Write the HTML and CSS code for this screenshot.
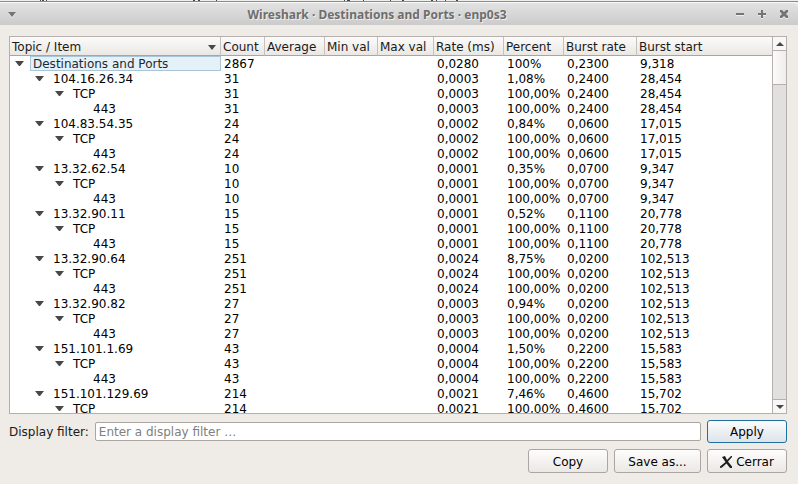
FILE: index.html
```html
<!DOCTYPE html>
<html lang="en">
<head>
<meta charset="utf-8">
<title>Wireshark · Destinations and Ports · enp0s3</title>
<link rel="stylesheet" href="styles.css">
</head>
<body>
<div class="backdrop"><svg width="460" height="1" viewBox="0 0 460 1" aria-hidden="true"><path d="M40 0h1v1h-1zM42 0h2v1h-2zM46 0h1v1h-1zM193 0h2v1h-2zM198 0h2v1h-2zM216 0h1v1h-1zM344 0h1v1h-1zM347 0h3v1h-3zM363 0h1v1h-1zM390 0h1v1h-1zM402 0h2v1h-2zM431 0h2v1h-2zM436 0h1v1h-1zM445 0h1v1h-1zM456 0h2v1h-2z"/></svg></div>
<header class="titlebar">
  <button class="wm" aria-label="Window menu"><svg width="8" height="5" viewBox="0 0 8 5"><path d="M0 0h8L4 5z"/></svg></button>
  <h1>Wireshark · Destinations and Ports · enp0s3</h1>
  <div class="wm-group">
    <button class="wm" aria-label="Minimize"><svg width="8" height="8" viewBox="0 0 8 8"><path d="M0 3h8v2H0z"/></svg></button>
    <button class="wm" aria-label="Maximize"><svg width="8" height="8" viewBox="0 0 8 8"><path d="M3 0h2v3h3v2H5v3H3V5H0V3h3z"/></svg></button>
    <button class="wm" aria-label="Close"><svg width="8" height="8" viewBox="0 0 8 8"><path d="M0 0h2l2 2 2-2h2v2L6 4l2 2v2H6L4 6 2 8H0V6l2-2-2-2z"/></svg></button>
  </div>
</header>
<main class="dialog">
  <div class="panel">
    <div class="view">
      <table>
        <colgroup><col class="c-item"><col class="c-count"><col class="c-avg"><col class="c-min"><col class="c-max"><col class="c-rate"><col class="c-pct"><col class="c-brate"><col></colgroup>
        <thead><tr>
          <th><span class="sorted">Topic / Item<svg width="8" height="5" viewBox="0 0 8 5"><path d="M0 0h8L4 5z"/></svg></span></th>
          <th>Count</th><th>Average</th><th>Min val</th><th>Max val</th><th>Rate (ms)</th><th>Percent</th><th>Burst rate</th><th>Burst start</th>
        </tr></thead>
        <tbody id="rows"></tbody>
      </table>
    </div>
    <div class="scrollbar">
      <button aria-label="Scroll up"><svg width="8" height="4" viewBox="0 0 8 4"><path d="M4 0l4 4H0z"/></svg></button>
      <div class="track"><div class="thumb"></div></div>
      <button aria-label="Scroll down"><svg width="8" height="4" viewBox="0 0 8 4"><path d="M0 0h8L4 4z"/></svg></button>
    </div>
  </div>
  <form class="filter">
    <label for="filter">Display filter:</label>
    <input id="filter" type="text" placeholder="Enter a display filter …">
    <button type="button" class="btn default">Apply</button>
  </form>
  <div class="actions">
    <button class="btn">Copy</button>
    <button class="btn save">Save as...</button>
    <button class="btn"><svg width="13" height="12" viewBox="0 0 13 12"><path d="M2 1L5 0l2 4 4-4h1v1L8 5.500l4 5V12h-2L6.500 7.500 2 11.500 0 12v-1.500L5.500 6z"/></svg>Cerrar</button>
  </div>
</main>
<script src="rows.js"></script>
</body>
</html>
```
FILE: rows.js
```js
const hosts = [
  ["104.16.26.34", "31", "0,0003", "1,08%", "0,2400", "28,454"],
  ["104.83.54.35", "24", "0,0002", "0,84%", "0,0600", "17,015"],
  ["13.32.62.54", "10", "0,0001", "0,35%", "0,0700", "9,347"],
  ["13.32.90.11", "15", "0,0001", "0,52%", "0,1100", "20,778"],
  ["13.32.90.64", "251", "0,0024", "8,75%", "0,0200", "102,513"],
  ["13.32.90.82", "27", "0,0003", "0,94%", "0,0200", "102,513"],
  ["151.101.1.69", "43", "0,0004", "1,50%", "0,2200", "15,583"],
  ["151.101.129.69", "214", "0,0021", "7,46%", "0,4600", "15,702"]
];
const arrow = '<svg width="9" height="5" viewBox="0 0 9 5"><path d="M0 0h9L5 5H4z"/></svg>';
const body = document.getElementById("rows");

function addRow(level, name, count, rate, percent, burst, start) {
  const tr = document.createElement("tr");
  tr.className = "level-" + level;
  const cells = [count, "", "", "", rate, percent, burst, start];
  tr.innerHTML =
    `<td><div class="item">${level < 3 ? arrow : ""}<span class="name">${name}</span></div></td>` +
    cells.map(text => `<td>${text}</td>`).join("");
  body.append(tr);
}

addRow(0, "Destinations and Ports", "2867", "0,0280", "100%", "0,2300", "9,318");
hosts.forEach(([host, count, rate, percent, burst, start], index) => {
  addRow(1, host, count, rate, percent, burst, start);
  addRow(2, "TCP", count, rate, "100,00%", burst, start);
  if (index < hosts.length - 1) addRow(3, "443", count, rate, "100,00%", burst, start);
});
```
FILE: styles.css
```css
* { box-sizing: border-box; }
body {
  margin: 0;
  height: 100vh;
  display: flex;
  flex-direction: column;
  background: #efebe7;
  color: #1a1a1a;
  font: 12px/15px "DejaVu Sans", sans-serif;
}
svg { display: block; fill: #484848; flex: none; }
button, input { font: inherit; color: inherit; margin: 0; }
.backdrop {
  flex: none;
  height: 2px;
  background: #efefeb;
  border-bottom: 1px solid #8a8c88;
}
.titlebar {
  flex: none;
  display: flex;
  align-items: center;
  height: 23px;
  padding: 0 7px 0 8px;
  background: linear-gradient(#e2e2e2, #cbcbcb);
  border-top: 1px solid #fafafa;
  border-radius: 0 5px 0 0;
}
.titlebar h1 {
  flex: 1;
  margin: 0;
  padding: 2px 0 0 2px;
  text-align: center;
  font: bold 12px/20px "Noto Sans", sans-serif;
  color: #6e6e6e;
  text-shadow: 1px 1px #eeeeee;
}
.wm { display: flex; padding: 0; border: 0; background: none; }
.wm svg { fill: #747474; filter: drop-shadow(0 1px 0 #eeeeee); overflow: visible; }
.wm-group { display: flex; gap: 14px; padding-right: 3px; }
.dialog {
  flex: 1;
  min-height: 0;
  display: flex;
  flex-direction: column;
  padding: 11px 11px 11px 9px;
}
.panel {
  flex: 1;
  min-height: 0;
  display: flex;
  border: 1px solid #b5b0ad;
  background: #fff;
}
.view { flex: 1; min-width: 0; overflow: hidden; }
table { width: 100%; table-layout: fixed; border-collapse: separate; border-spacing: 0; }
.c-item { width: 211px; }
.c-count { width: 44px; }
.c-avg { width: 60px; }
.c-min { width: 53px; }
.c-max { width: 56px; }
.c-rate { width: 70px; }
.c-pct { width: 60px; }
.c-brate { width: 73px; }
th {
  height: 19px;
  padding: 2px 2px 0;
  text-align: left;
  font-weight: normal;
  white-space: nowrap;
  background: linear-gradient(#fcfbfa, #eae7e3);
  border-right: 1px solid #c5c1be;
  border-bottom: 1px solid #a9a5a2;
}
th:last-child { border-right: 0; }
.sorted { display: flex; align-items: center; justify-content: space-between; padding-right: 2px; }
td { height: 15px; padding: 2px 0 0 3px; line-height: 13px; white-space: nowrap; color: #000; }
td:first-child { padding: 0; }
.item { display: flex; align-items: center; gap: 6px; height: 15px; padding-left: 5px; }
.name { padding: 2px 3px 0; }
.level-0 .name { flex: 1; height: 15px; padding: 1px 2px 0; background: #e5f1f9; border: 1px solid #a9c5d8; color: #1a2a33; }
.level-1 .item { padding-left: 25px; }
.level-2 .item { padding-left: 45px; }
.level-3 .item { padding-left: 80px; }
.scrollbar {
  flex: none;
  width: 14px;
  display: flex;
  flex-direction: column;
  border-left: 1px solid #b5b0ad;
}
.scrollbar button {
  display: flex;
  align-items: center;
  justify-content: center;
  height: 13px;
  padding: 0;
  border: 0;
  background: #f8f7f6;
}
.track { flex: 1; background: #e2e0de; border: solid #b5b0ad; border-width: 1px 0; }
.thumb { height: 34px; background: linear-gradient(90deg, #fcfbfa, #efedeb); border-bottom: 1px solid #b5b0ad; }
.filter { display: flex; align-items: center; gap: 6px; margin: 6px 0; }
.filter label { padding-top: 2px; }
.filter input {
  flex: 1;
  min-width: 0;
  height: 19px;
  padding: 0 3px;
  border: 1px solid #aca6a3;
  border-radius: 2px;
  background: #fff;
}
.filter input::placeholder { color: #808080; opacity: 1; }
.btn {
  display: flex;
  align-items: center;
  justify-content: center;
  gap: 3px;
  width: 80px;
  height: 24px;
  padding: 2px 0 0;
  border: 1px solid #aca6a3;
  border-radius: 3px;
  background: linear-gradient(#fdfdfc, #ebe8e5);
  color: #000;
}
.btn.default { height: 23px; border-color: #1f6f9f; background: linear-gradient(#fbfcfd, #dde4e9); }
.btn.save { width: 87px; }
.btn svg { fill: #1c1c1c; }
.actions { display: flex; justify-content: flex-end; gap: 6px; }
```
